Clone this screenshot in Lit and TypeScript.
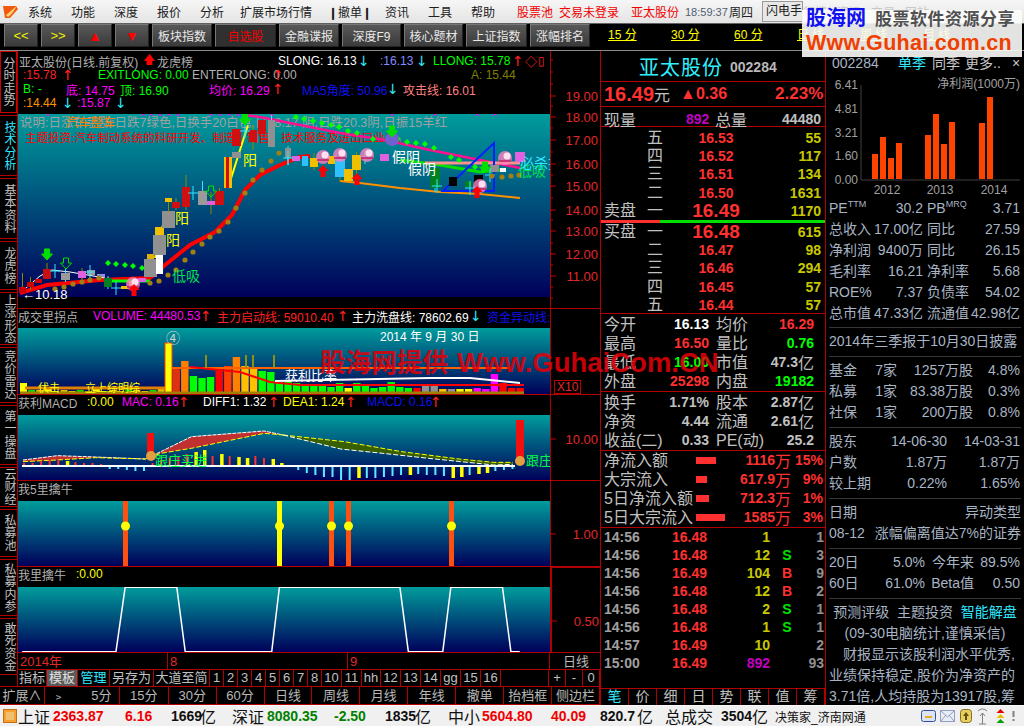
import { LitElement, html, svg, css } from 'lit';
import { customElement } from 'lit/decorators.js';

type Item = [number, string, string?, string?];

// a row of labels pinned to their x by giving each the width up to the next one
const row = (cls: string, start: number, end: number, items: Item[]) => html`<div class="row ${cls}">
  <span style="width:${items[0][0] - start}px"></span>
  ${items.map((it, i) => {
    const next = i + 1 < items.length ? items[i + 1][0] : end;
    const isArrow = it[1] === '↑' || it[1] === '↓';
    return html`<span class="${it[3] || ''} ${isArrow ? 'ar' : ''}" style="width:${next - it[0]}px;${it[2] ? `color:${it[2]}` : ''}">${it[1]}</span>`;
  })}
</div>`;

const RED = '#ff2020', CY = '#30e8ff', GR = '#00ff00', MG = '#ff00ff', YE = '#ffff00', GY = '#b0b0b0';

const candle = (x0: number, x1: number, y0: number, y1: number, c: string, wt?: number, wb?: number, wc = '#8a8a00') => {
  const m = (x0 + x1) / 2;
  return svg`${wt !== undefined ? svg`<line x1=${m} x2=${m} y1=${wt} y2=${wb} stroke=${wc} stroke-width="1"/>` : ''}
    <rect x=${x0} y=${y0} width=${x1 - x0} height=${y1 - y0} fill=${c}/>`;
};
const cross = (x: number, y: number, r = 7, c = CY) =>
  svg`<path d="M${x - 5} ${y}H${x + 5}M${x} ${y - r}V${y + r}" stroke=${c} stroke-width="1" fill="none"/>`;
const poly = (p: number[][], c: string, w: number, dash = '') =>
  svg`<polyline points=${p.map((q) => q.join(',')).join(' ')} fill="none" stroke=${c} stroke-width=${w} stroke-dasharray=${dash}/>`;
const flower = (x: number, y: number) => svg`
  <circle cx=${x} cy=${y} r="7" fill="#ff80c0" opacity=".8"/>
  <circle cx=${x + 2} cy=${y - 2} r="3.5" fill="#ffe0f0"/>
  <path d="M${x - 6} ${y + 3}h12" stroke="#c02060" stroke-width="1.5"/>`;
const down = (x: number, y: number, c: string, hollow = false) => svg`
  <path d="M${x - 2.5} ${y}h5v5h3l-5.5 6l-5.5 -6h3z" fill=${hollow ? 'none' : c} stroke=${c}/>`;
const up = (x: number, y: number) => svg`<path d="M${x} ${y}l5.5 6h-3v6h-5v-6h-3z" fill="#ff0000"/>`;
const label = (x: number, y: number, t: string, c: string, s = 13) =>
  svg`<text x=${x} y=${y} fill=${c} font-size=${s}>${t}</text>`;

const CANDLES: [number, number, number, number, string, number?, number?, string?][] = [
  [19, 26, 287, 293, '#d00000', 273, 293], [27, 34, 282, 287, '#d00000', 277, 290], [35, 42, 279, 283, '#d00000'],
  [43, 51, 269, 279, '#c81010', 263, 279], [61, 70, 273, 280, '#9a9a9a', 268, 282, CY], [78, 86, 271, 278, '#e060e0', 268, 282],
  [87, 95, 270, 275, '#9a9a9a'], [97, 105, 274, 277, '#9090e0'], [104, 112, 278, 287, '#008020', 276, 289, CY],
  [121, 128, 286, 289, '#f0c000'], [129, 137, 281, 287, '#f0c000'], [138, 146, 278, 282, '#e060e0'],
  [147, 154, 254, 259, '#e0b000'], [144, 157, 259, 277, '#909090'], [156, 163, 255, 274, '#ffffff'],
  [153, 166, 235, 255, '#909090'], [155, 164, 227, 235, '#f0c000'], [162, 175, 211, 228, '#909090'],
  [165, 172, 198, 202, '#f0c000', 198, 212], [172, 180, 202, 208, '#d01010', 198, 210], [182, 190, 187, 207, '#d01010', 175, 210],
  [198, 207, 191, 205, '#9a9a9a', 181, 205, CY], [207, 215, 201, 205, '#e060e0', 192, 214], [215, 224, 191, 205, '#d01010', 188, 205],
  [224, 232, 157, 188, '#f8c000'], [226, 229, 157, 188, '#d01010'], [232, 241, 152, 158, '#909090'], [232, 241, 129, 146, '#d01010'],
  [249, 257, 130, 142, '#d01010', 125, 150], [258, 266, 120, 134, '#d01010'], [268, 275, 120, 147, '#909090', 115, 147, CY],
  [285, 291, 148, 158, '#909090', 146, 165, CY], [292, 300, 156, 161, '#e060e0'], [302, 308, 156, 166, '#30c0ff'],
  [310, 318, 158, 167, '#f0c000', 153, 170], [328, 336, 156, 164, '#f0c000'], [335, 345, 159, 177, '#30c0ff', 155, 182],
  [344, 353, 169, 181, '#f0c000'], [352, 361, 155, 170, '#f0c000', 152, 182], [380, 389, 154, 161, '#e060e0'],
  [430, 440, 168, 188, '#008020', 165, 192, CY], [449, 457, 177, 186, '#000000'], [465, 472, 181, 187, '#008020'],
  [474, 483, 175, 186, '#000000'], [490, 499, 165, 172, '#909090'], [500, 506, 168, 172, '#ffffff'], [515, 525, 152, 162, '#e060e0'],
];
const OLIVE = [[55,289],[64,287],[73,284],[82,282],[90,280],[99,278],[150,283],[159,281],[168,275],[176,270],[185,260],[193,252],[202,244],[210,237],[219,231],[228,222],[236,208],[245,193],[253,180],[262,170],[271,161],[279,153],[492,176],[502,177],[511,176],[519,175]];
const DIAMONDS = [[108,263],[116,264],[125,265],[133,266],[142,268],[296,117],[304,119],[313,121],[322,123],[331,125],[339,127],[348,131],[357,133],[373,139],[398,139],[407,142],[416,143],[425,144],[434,148],[451,157],[459,160],[475,167],[484,170]];
const XMARKS = [48,143,151,160,169,178,211,220,229,238,272,392,435,477,495];

const mainChart = () => svg`
  ${XMARKS.map((x) => svg`<path d="M${x - 2} 112l4 4m0 -4l-4 4" stroke="#ff00ff"/>`)}
  ${label(20, 127, '说明:日涨车手涨:日跌7绿色,日换手20白色,日18.17 阴,日跌20.3阴,日振15羊红', '#a0a0a0', 12.5)}
  ${label(66, 127, '汽车整车', '#ff8000', 12.5)}
  ${label(25, 142, '主题投资:汽车制动系统的科研开发、制造、销售、技术服务及进出口业务。', '#ff0000', 11.5)}
  ${poly([[20,293],[47,285],[100,280],[150,278],[165,265],[190,245],[215,232],[232,215],[245,190],[260,175],[280,165],[300,157],[310,156]], '#ff0000', 4)}
  ${poly([[340,181],[360,183],[400,188],[440,192],[480,194],[520,198]], '#ff9000', 2)}
  ${poly([[245,115],[260,117],[300,125],[340,133],[385,140],[430,150],[480,160],[520,168]], '#ff1090', 2.5)}
  ${poly([[400,160],[440,165],[480,172],[500,170]], '#00e000', 3)}
  ${poly([[228,188],[240,150],[248,125]], '#ffff00', 2)}
  ${poly([[155,258],[166,212]], '#ffff00', 2)}
  ${poly([[26,288],[40,276],[52,270],[70,272],[105,278]], '#ffffff', 1)}
  ${poly([[108,281],[150,281]], '#00ff00', 3)}
  ${poly([[425,163],[520,163]], '#ff9090', 3)}
  <path d="M443 191L494 143V191Z" fill="none" stroke="#0020ff" stroke-width="2"/>
  ${CANDLES.map((c) => candle(c[0], c[1], c[2], c[3], c[4], c[5], c[6], c[7]))}
  ${[[55,271],[90,272],[116,288],[193,193],[245,131],[288,158],[365,157],[437,186],[470,188],[490,175]].map((p) => cross(p[0], p[1]))}
  ${OLIVE.map((p) => svg`<circle cx=${p[0]} cy=${p[1]} r="2.6" fill="#a08010"/>`)}
  ${DIAMONDS.map((p) => svg`<path d="M${p[0]} ${p[1] - 3}l3 3l-3 3l-3 -3z" fill="#00ff00"/>`)}
  ${[[133,284],[323,157],[340,155],[367,155],[505,158],[480,186]].map((p) => flower(p[0], p[1]))}
  <circle cx="392" cy="139" r="7" fill="#7060d0"/>
  ${down(47, 249, '#00e000')}${down(66, 258, '#00e000', true)}${down(211, 186, '#00e000', true)}${down(245, 114, '#00e000')}${down(392, 126, '#00e000')}${down(485, 162, '#00e000')}
  ${up(134, 284)}${up(323, 165)}${up(357, 173)}${up(477, 186)}
  ${label(243, 165, '阳', YE, 14)}${label(175, 223, '阳', YE, 14)}${label(166, 245, '阳', YE, 14)}
  ${label(172, 281, '低吸', '#00e050', 14)}${label(518, 176, '低吸', '#00e050', 14)}
  ${label(520, 168, '必杀技', CY, 14)}
  ${label(392, 162, '假阴', '#ffffff', 14)}${label(408, 174, '假阴', '#ffffff', 14)}
  ${label(22, 299, '←10.18', '#ffffff', 13)}
`;

const VOL: [number, string][] = [[368,'#e03010'],[361,'#ff8000'],[376,'#00ff00'],[378,'#00ff00'],[377,'#00ff00'],[371,'#ff0000'],[366,'#ff4000'],[357,'#ff8000'],[366,'#ffc000'],[368,'#ffc000'],[371,'#00ff00'],[372,'#00ff00'],[382,'#00ff00'],[381,'#00ff00'],[383,'#00ff00'],[385,'#00ff00'],[384,'#00ff00'],[386,'#00ff00'],[387,'#00ff00'],[383,'#00ff00'],[388,'#ffff00'],[383,'#00ff00'],[386,'#00ff00'],[388,'#00ff00'],[387,'#00ff00'],[382,'#00ff00'],[387,'#00ff00'],[388,'#00ff00'],[388,'#ff0000'],[384,'#909090'],[386,'#909090'],[389,'#ffc000'],[389,'#909090'],[389,'#ffff00'],[389,'#ffff00'],[388,'#ff00ff'],[389,'#ff00ff'],[374,'#ff00ff'],[383,'#ff0000'],[388,'#ff0000'],[388,'#ff0000']];
const LOW = [383,390,390,389,391,390,391,390,391,389,391,390,391,389,390,391,390,388];

const volChart = () => svg`
  ${LOW.map((y, i) => svg`<rect x=${20 + i * 8.1} y=${y} width="7" height=${395 - y} fill=${i % 3 === 0 ? '#ffff00' : i % 3 === 1 ? '#00e000' : '#e0c000'}/>`)}
  <rect x="165" y="343" width="7" height="52" fill="#ffff00" stroke="#ff4000"/>
  ${VOL.map((b, i) => svg`<rect x=${172.5 + i * 8.6} y=${b[0]} width="7.4" height=${395 - b[0]} fill=${b[1]}/>`)}
  ${poly([[25,388],[165,388]], '#e08000', 3)}
  ${poly([[20,393],[524,393]], '#a08000', 3)}
  ${poly([[172,368],[510,368]], '#ff6000', 2)}
  ${poly([[190,367],[240,372],[270,382],[300,385],[524,385]], '#ff0000', 2)}
  ${poly([[275,381],[430,378],[470,378],[520,383]], '#ffffff', 2)}
  ${[205,245,252,273].map((x) => svg`<rect x=${x} y=${355} width="2" height="13" fill="#909010"/>`)}
  ${label(166, 343, '④', '#d0d0d0', 14)}
  ${label(285, 380, '获利比率', '#ffffff', 13)}
  ${label(380, 341, '2014 年 9 月 30 日', '#ffffff', 12)}
  ${label(38, 392, '伏击', '#ffff00', 11)}${label(85, 392, '立上综明综', '#ffff00', 11)}
`;

const MACD = [3,3,5,6,6,5,4,3,3,2,-3,-3,-4,-5,-5,3,6,8,10,12,14,16,10,12,10,9,8,10,8,7,3,-1,-4,-7,-9,-11,-11,-14,-15,-12,-12,-12,-11,-10,-9,-9,-8,-9,-9,-10,-12,-11,-9,-8,-7,-5,-4,-3];
const YELLOW = new Set([5, 20, 21, 23, 25, 26, 29, 30, 39, 45, 50, 51, 53, 54]);
const zx = (x: number) => x / 2.613;
const zy = (y: number) => 305 + y / 3;
const conv = (pts: number[][]) => pts.map((p) => [zx(p[0]), zy(p[1])]);
const TOP_R = [[60,465],[150,452],[250,456],[380,462],[420,440],[500,395],[690,378],[740,390]];
const BOT_R = [[60,470],[150,465],[250,458],[380,462],[420,445],[500,430],[690,385],[740,390]];
const TOP_O = [[740,390],[900,410],[1050,440],[1200,462],[1290,472],[1340,472]];
const BOT_O = [[740,390],[890,432],[1000,445],[1120,460],[1290,480],[1340,478]];
const band = (a: number[][], b: number[][], c: string) =>
  svg`<polygon points=${[...conv(a), ...conv(b).reverse()].map((p) => p.join(',')).join(' ')} fill=${c}/>`;

const macdChart = () => svg`
  ${band(TOP_R, BOT_R, '#c03030')}${band(TOP_O, BOT_O, '#386000')}
  ${poly(conv(TOP_R), '#ffffff', 1, '4 1')}${poly(conv(BOT_R), '#ffff00', 1, '5 2')}
  ${poly(conv(TOP_O), '#ffff00', 1, '5 2')}${poly(conv(BOT_O), '#ffffff', 1, '5 2')}
  ${MACD.map((h, i) => {
    const x = 23 + i * 8.57;
    const c = YELLOW.has(i) ? '#ffff00' : h > 0 ? '#ff3030' : '#60e8ff';
    return svg`<rect x=${x} y=${h > 0 ? 466 - h : 466} width=${YELLOW.has(i) ? 3.5 : 2} height=${Math.abs(h)} fill=${c}/>`;
  })}
  <rect x="22" y="465" width="493" height="2" fill="#ffffff"/>
  <rect x="147" y="433" width="7" height="25" fill="#f01010"/>
  <rect x="516" y="420" width="8" height="42" fill="#f01010"/>
  <circle cx="151" cy="456" r="5" fill="#e0a040"/><circle cx="520" cy="461" r="5" fill="#e0a040"/>
  ${label(155, 465, '跟庄买进', '#00ff40', 13)}${label(526, 465, '跟庄', '#00ff40', 13)}
`;

const signalChart = () => svg`
  ${[[125.5,'#ff5010'],[279.5,'#ffff00'],[331.5,'#ff5010'],[348.5,'#ff5010'],[451.5,'#ff5010']].map((b) => svg`
    <rect x=${(b[0] as number) - 2.5} y="501" width="5" height="66" fill=${b[1]}/>
    <circle cx=${b[0]} cy="526" r="4.5" fill="#ffff00"/>`)}
`;

const TRAP = [[58,485],[303,485],[327,292],[462,292],[484,485],[710,485],[730,292],[1045,292],[1067,485],[1157,485],[1178,292],[1313,292],[1335,485],[1358,485]];
const trapChart = () => poly(TRAP.map((p) => [zx(p[0]), 490 + p[1] / 3]), '#ffffff', 1.5);

const plot = (y: number, h: number, content: unknown) =>
  html`<svg class="plotsvg" width="532" height=${h} viewBox="18 ${y} 532 ${h}">${content}</svg>`;

const axis = (y: number, h: number, ticks: [number, string][], minor: number[] = []) =>
  html`<svg class="axis" width="50" height=${h} viewBox="550 ${y} 50 ${h}">
    ${minor.map((t) => svg`<path d="M550 ${t}h3" stroke="#c00000"/>`)}
    ${ticks.map((t) => svg`<path d="M550 ${t[0]}h6" stroke="#c00000"/>
      <text x="598" y=${t[0] + 5} text-anchor="end" fill="#e02828" font-size="13">${t[1]}</text>`)}
  </svg>`;

const MAIN_TICKS: [number, string][] = [[96,'19.00'],[117,'18.00'],[140,'17.00'],[164,'16.00'],[186,'15.00'],[210,'14.00'],[231,'13.00'],[254,'12.00'],[276,'11.00']];
const MAIN_MINOR = [60,72,84,106,128,152,175,198,220,243,265,287,298];

const VTABS: [string, number, string][] = [['分时走势',62,'on'],['技术分析',61,'cy'],['基本资料',61,''],['龙虎榜',49,''],['上涨形态',53,''],['竞价雷达',56,''],['第一操盘',60,''],['云财经',40,''],['私募池',48,''],['私募内参',57,''],['敢死资金',57,'']];

const BUTTONS: [string, number, string][] = [['<<',34,'y'],['>>',34,'y'],['▲',34,'r'],['▼',34,'r'],['板块指数',60,''],['自选股',61,'act'],['金融谍报',60,''],['深度F9',59,''],['核心题材',59,''],['上证指数',61,''],['涨幅排名',60,'']];

const TABS: [string, number, string][] = [['指标',29,''],['模板',31,'gr'],['管理',32,'cy'],['另存为',44,''],['大道至简',56,''],['1',14,''],['2',14,''],['3',14,''],['4',14,''],['5',14,''],['6',14,''],['7',14,''],['8',14,''],['10',20,''],['11',20,''],['hh',19,''],['12',20,''],['13',20,''],['14',20,''],['gg',20,''],['15',20,''],['16',20,''],['',48,''],['+',17,''],['-',17,''],['0',17,'']];
const FRAMES: [string, number][] = [['扩展∧',45],['﹥　　5分',75],['15分',49],['30分',48],['60分',48],['日线',48],['周线',48],['月线',48],['年线',48],['撤单',48],['抬档框',48],['侧边栏',48]];

const ASKS = [['五','16.53','55'],['四','16.52','117'],['三','16.51','134'],['二','16.50','1631'],['一','16.49','1170']];
const BIDS = [['一','16.48','615'],['二','16.47','98'],['三','16.46','294'],['四','16.45','57'],['五','16.44','57']];
const FLOWS = [['净流入额',20,'1116','15%'],['大宗流入',11,'617.9','9%'],['5日净流入额',13,'712.3','1%'],['5日大宗流入',29,'1585','3%']];
const TRADES = [['14:56','16.48','1','','1'],['14:56','16.48','12','S','3'],['14:56','16.49','104','B','9'],['14:56','16.48','12','B','2'],['14:56','16.48','2','S','1'],['14:56','16.48','1','S','1'],['14:57','16.49','10','','2'],['15:00','16.49','892','','93']];
const PROFIT: [number, number][] = [[872,154],[880,137],[888,158],[896,143],[925,135],[933,114],[941,144],[949,122],[979,123],[987,97]];

@customElement('app-root')
export class AppRoot extends LitElement {
  static styles = css`
    :host {
      display: block; position: relative; width: 1024px; height: 726px; overflow: hidden; background: #000;
      font-family: "Liberation Sans", "Noto Sans CJK SC", sans-serif; font-size: 12px; color: #b8b8b8;
    }
    .row { display: flex; white-space: nowrap; align-items: center; }
    .row span { flex: none; overflow: visible; }
    .row .ar { font-family: "DejaVu Sans", sans-serif; font-size: 14px; line-height: 14px; }
    .menu { height: 23px; background: linear-gradient(#f6f6f6, #e4e4e4); color: #202020; font-size: 12px; position: relative; }
    .menu .row { height: 23px; }
    .menu .redt { color: #f00000; }
    .menu .clock { color: #506070; font-size: 11px; }
    .menu .box { border: 1px solid #999; background: #e8e8e8; padding: 2px 0 2px 3px; height: 15px; line-height: 15px; box-sizing: content-box; width: 36px !important; }
    .menu .fade { color: #c8c8c8; }
    .logo { position: absolute; left: 2px; top: 3px; }
    .toolbar { height: 28px; box-sizing: border-box; background: #000; border-top: 1px solid #606060; border-bottom: 1px solid #8a8a8a; display: flex; position: relative; }
    .btns { display: flex; gap: 3px; padding-left: 4px; height: 23px; }
    .btn {
      background: linear-gradient(#585858, #3a3a3a); border: 1px solid #777; border-right-color: #222; border-bottom-color: #222;
      box-sizing: border-box; display: flex; align-items: center; justify-content: center; color: #e8e8e8; font-size: 12px;
    }
    .btn.y { color: #f0f000; font-size: 13px; }
    .btn.r { color: #ff0000; font-size: 14px; }
    .btn.act { color: #f00000; background: #303030; }
    .frames { display: flex; padding-left: 18px; }
    .frames u { color: #ffff00; font-size: 12px; display: block; width: 63px; line-height: 23px; }
    .body { display: flex; height: 654px; }
    .left { width: 600px; display: flex; flex-direction: column; }
    .upper { display: flex; height: 635px; }
    .vtabs { width: 18px; display: flex; flex-direction: column; gap: 2px; border-right: 1px solid #b00000; box-sizing: border-box; }
    .vt {
      flex: none; writing-mode: vertical-rl; text-orientation: upright; text-align: center; font-size: 12px; line-height: 17px;
      border-top: 1px solid #b00000; border-bottom: 1px solid #b00000; box-sizing: border-box; color: #c0c0c0; letter-spacing: .5px; white-space: nowrap;
    }
    .vt.on { border: 1px solid #d00000; }
    .vt.cy { color: #30e8ff; }
    .charts { width: 582px; display: flex; flex-direction: column; }
    .pane { display: flex; border-bottom: 1px solid #b00000; box-sizing: border-box; }
    .pane > .ax { width: 50px; border-left: 1px solid #b00000; box-sizing: border-box; position: relative; }
    .pane > .mainc { width: 532px; display: flex; flex-direction: column; }
    .hd { flex: none; overflow: hidden; }
    .hd .row { height: 14px; }
    .hd.big { padding-top: 3px; box-sizing: border-box; }
    .plot { background: linear-gradient(#009c9c, #00005a); flex: 1; overflow: hidden; }
    .plot.m { background: linear-gradient(#009c9c 0, #00005a 183px, #000 183px); }
    .plotsvg { display: block; }
    .plotsvg text, .axis text { font-family: "Liberation Sans", "Noto Sans CJK SC", sans-serif; }
    .axis { display: block; position: absolute; left: -1px; top: 0; overflow: visible; }
    .x10 { position: absolute; left: 3px; bottom: 0; border: 1px solid #c00000; color: #e02828; font-size: 12px; padding: 0 2px; line-height: 12px; }
    .p5ax { border-left-width: 2px !important; border-top: 1px solid #b00000; }
    .taxis { height: 17px; display: flex; border-bottom: 1px solid #b00000; box-sizing: border-box; color: #e02828; font-size: 13px; }
    .taxis span { box-sizing: border-box; padding-left: 2px; border-right: 1px solid #b00000; line-height: 17px; }
    .taxis .dx { color: #b8b8b8; text-align: center; border: 0; }
    .tabs { height: 16px; display: flex; }
    .tabs span { box-sizing: border-box; border-right: 1px solid #b00000; text-align: center; line-height: 15px; color: #c0c0c0; font-size: 13px; }
    .tabs .gr { background: #5a5a5a; color: #e0e0e0; }
    .tabs .cy { color: #30e8ff; }
    .tf { height: 19px; display: flex; border-top: 1px solid #b00000; border-bottom: 1px solid #b00000; box-sizing: border-box; }
    .tf span { box-sizing: border-box; border-right: 1px solid #b00000; text-align: center; line-height: 17px; font-size: 13px; color: #b8b8b8; }
    .quote { width: 226px; border-left: 1px solid #b00000; border-right: 1px solid #b00000; box-sizing: border-box; display: flex; flex-direction: column; font-size: 16px; color: #c0c0c0; }
    .q { border-bottom: 1px solid #b00000; box-sizing: border-box; flex: none; }
    .num { font-weight: bold; font-size: 14px; }
    .title { height: 31px; display: flex; align-items: center; padding-left: 38px; gap: 7px; color: #30f0ff; font-size: 20px; letter-spacing: 1px; }
    .title b { color: #b8b8b8; font-size: 14px; letter-spacing: 0; margin-top: 2px; }
    .price { height: 25px; display: flex; align-items: center; padding: 0 0 0 3px; color: #ff3030; font-weight: bold; }
    .price .big { font-size: 20px; }
    .price .yuan { font-weight: normal; color: #c0c0c0; font-size: 16px; width: 26px; }
    .price .chg { font-size: 16px; width: 95px; }
    .price .pct { font-size: 17px; }
    .cur { height: 20px; display: grid; grid-template-columns: 82px 23px 6px 36px 1fr; padding-left: 3px; padding-right: 4px; align-items: center; }
    .cur .m { color: #c000c0; }
    .cur .r { text-align: right; }
    .book { display: flex; flex-direction: column; flex: none; }
    .book.ask { padding-top: 2px; }
    .book.bid { height: 91px; }
    .ob { display: grid; grid-template-columns: 42px 30px 80px 65px; padding-left: 3px; height: 18.2px; flex: none; align-items: center; line-height: 18px; }
    .ob .p { color: #ff3030; text-align: center; }
    .ob .p.big { font-size: 19px; }
    .ob .v { color: #c8c800; text-align: right; }
    .ob .c { text-align: center; width: 16px; margin-left: 1px; }
    .bar { height: 3px; flex: none; background: linear-gradient(90deg, #ff3030 59px, #00e000 59px); }
    .st { display: grid; grid-template-columns: 46px 59px 46px 59px; padding: 1px 0 0 3px; }
    .st div { height: 19px; line-height: 19px; white-space: nowrap; }
    .st .r { display: flex; justify-content: flex-end; align-items: center; font-weight: bold; font-size: 14px; }
    .st .r em { font: normal 16px/19px "Noto Sans CJK SC", sans-serif; }
    .st .g2 { margin-left: 7px; }
    .fl { display: grid; grid-template-columns: 92px 30px 65px 32px; padding-left: 3px; }
    .fl div { height: 19px; line-height: 19px; white-space: nowrap; color: #ff3030; }
    .fl .l { color: #c0c0c0; }
    .fl i { display: block; height: 7px; background: #ff3030; margin-top: 6px; }
    .fl .a { display: flex; justify-content: flex-end; align-items: center; font-weight: bold; font-size: 14px; }
    .fl .c { text-align: right; font-weight: bold; font-size: 14px; }
    .fl .a em { font: normal 16px/19px "Noto Sans CJK SC", sans-serif; }
    .tr { display: grid; grid-template-columns: 68px 60px 38px 32px 22px; padding-left: 3px; font-weight: bold; font-size: 14px; flex: 1; align-content: start; }
    .tr div { height: 18px; line-height: 18px; }
    .tr .c { color: #a0a0a0; }
    .tr .p { color: #ff3030; }
    .tr .v { text-align: right; }
    .tr .f { text-align: center; padding-left: 2px; }
    .tr .n { color: #909090; text-align: right; }
    .qtabs { display: flex; height: 17px; flex: none; border-top: 1px solid #b00000; box-sizing: border-box; font-size: 14px; line-height: 15px; }
    .qtabs span { width: 28px; border-right: 1px solid #b00000; box-sizing: border-box; text-align: center; color: #c0c0c0; }
    .qtabs .cy { color: #30e8ff; }
    .side { width: 198px; font-size: 14px; color: #a8b4c4; box-sizing: border-box; padding: 0 3px; overflow: hidden; display: flex; flex-direction: column; }
    .shead { height: 20px; flex: none; padding-top: 5px; box-sizing: border-box; line-height: 15px; }
    .side .row { height: 15px; }
    .mini { display: block; flex: none; margin-left: -3px; }
    .mini text { font-family: "Liberation Sans", "Noto Sans CJK SC", sans-serif; fill: #a0a0a0; }
    .sec { border-bottom: 1px solid #383838; padding: 3px 0 4px; flex: none; }
    .sec.first { padding: 0 0 3px; }
    .l { height: 21px; line-height: 21px; white-space: nowrap; display: flex; }
    .kv { display: flex; justify-content: space-between; }
    .k1 { width: 94px; }
    .k2 { width: 93px; margin-left: 4px; }
    .l sup { font-size: 9px; line-height: 9px; vertical-align: 6px; }
    .s3 > span { text-align: right; display: block; }
    .s3 > span:first-child { text-align: left; }
    .para { padding-top: 3px; }
    .para .ctr { justify-content: center; }
    .para .cy { color: #30e8ff; }
    .status { height: 21px; background: #f0f0f0; color: #101010; font-size: 16px; position: relative; border-top: 1px solid #fafafa; box-sizing: border-box; }
    .status .row { height: 20px; }
    .status .bn { font-weight: bold; font-size: 14px; }
    .status .sm { font-size: 12px; }
    .tray { position: absolute; left: 921px; top: 2px; }
    .sicon { position: absolute; left: 3px; top: 3px; width: 12px; height: 12px; background: #f0c070; border: 1px solid #c07010; box-shadow: inset 0 0 0 2px #f8a030; }
    .wm-top { position: absolute; left: 802px; top: 10px; width: 220px; height: 47px; background: rgba(252, 252, 250, .9); }
    .wm-a { position: absolute; left: 4px; top: 0; color: #1010f0; font-size: 20px; font-weight: bold; line-height: 17px; }
    .wm-b { position: absolute; left: 73px; top: 0; color: #505050; font-size: 17px; font-weight: bold; letter-spacing: .5px; line-height: 19px; font-family: "Liberation Serif", "Noto Sans CJK SC", serif; }
    .wm-c { position: absolute; left: 4px; top: 21px; color: #f04000; font-size: 21.5px; font-weight: bold; line-height: 24px; letter-spacing: .3px; }
    .wm-mid { position: absolute; left: 320px; top: 345px; color: rgba(224, 0, 10, .88); font-size: 25.6px; font-weight: bold; line-height: 36px; white-space: nowrap; }
    .wm-mid span { font-size: 27.5px; margin-left: 9px; }
  `;

  private pane(h: number, headH: number, head: unknown, y: number, content: unknown, ax: unknown, main = false, extra = '') {
    const plotH = h - headH - 1;
    return html`<div class="pane" style="height:${h}px">
      <div class="mainc">
        <div class="hd ${main ? 'big' : ''}" style="height:${headH}px">${head}</div>
        <div class="plot ${main ? 'm' : ''}">${plot(y, plotH, content)}</div>
      </div>
      <div class="ax ${extra}">${ax}</div>
    </div>`;
  }

  render() {
    return html`
      <div class="menu">
        <svg class="logo" width="17" height="17" viewBox="0 0 17 17">
          <path d="M1 3h13l2 3l-8 9H3z" fill="#f05a10"/><path d="M4 12C7 10 10 6 15 3C12 8 9 12 6 14z" fill="#ffd070"/>
        </svg>
        ${row('', 0, 1024, [
          [28,'系统'],[71,'功能'],[114,'深度'],[157,'报价'],[200,'分析'],[240,'扩展市场行情'],[328,'❙撤单❙'],[385,'资讯'],[428,'工具'],[471,'帮助'],
          [517,'股票池','','redt'],[559,'交易未登录','','redt'],[631,'亚太股份','','redt'],[685,'18:59:37','','clock'],[729,'周四'],[762,'闪电手','','box'],[812,'行情','','fade'],[846,'资讯','','fade'],[880,'交易','','fade'],[914,'网站','','fade'],
        ])}
      </div>
      <div class="toolbar">
        <div class="btns">${BUTTONS.map((b) => html`<div class="btn ${b[2]}" style="width:${b[1]}px">${b[0]}</div>`)}</div>
        <div class="frames">${['15 分','30 分','60 分','日 线','周 线','月 线'].map((t) => html`<u>${t}</u>`)}</div>
      </div>
      <div class="body">
        <div class="left">
          <div class="upper">
            <div class="vtabs">
              ${VTABS.map((v) => html`<div class="vt ${v[2]}" style="height:${v[1]}px">${v[0]}</div>`)}
            </div>
            <div class="charts">
              ${this.pane(258, 63, html`
                ${row('', 18, 550, [[19,'亚太股份(日线.前复权)',GY],[143,'🡅','#ff0000'],[157,'龙虎榜',GY],[278,'SLONG: 16.13','#ffffff'],[358,'↓',CY],[380,':16.13','#8888ff'],[416,'↓',CY],[433,'LLONG: 15.78',GR],[512,'↑',RED],[525,'◇',RED],[538,'▯',RED]])}
                ${row('', 18, 550, [[23,':15.78',RED],[62,'↑',RED],[98,'EXITLONG: 0.00',GR],[192,'ENTERLONG: 0.00',GY],[272,'↑',RED],[471,'A: 15.44','#808000']])}
                ${row('', 18, 550, [[23,'B: -',GR],[66,'底: 14.75',MG],[120,'顶: 16.90',GR],[209,'均价: 16.29',MG],[272,'↑',RED],[302,'MA5角度: 50.96','#1010f0'],[387,'↓',CY],[403,'攻击线: 16.01','#ff8080']])}
                ${row('', 18, 550, [[23,':14.44','#ff9000'],[62,'↓',CY],[77,':15.87',MG],[115,'↓',CY]])}
              `, 114, mainChart(), axis(51, 257, MAIN_TICKS, MAIN_MINOR), true)}
              ${this.pane(86, 19, row('', 18, 550, [[18,'成交里拐点',GY],[93,'VOLUME: 44480.53',MG],[200,'↑',RED],[217,'主力启动线: 59010.40',RED],[337,'↑',RED],[352,'主力洗盘线: 78602.69','#ffffff'],[470,'↓',CY],[487,'资金异动线:','#1010f0']]),
                328, volChart(), html`${axis(309, 85, [])}<div class="x10">X10</div>`)}
              ${this.pane(86, 20, row('', 18, 550, [[18,'获利MACD',GY],[87,':0.00',YE],[122,'MAC: 0.16',MG],[178,'↑',RED],[203,'DIFF1: 1.32','#ffffff'],[268,'↑',RED],[283,'DEA1: 1.24',YE],[345,'↑',RED],[367,'MACD: 0.16','#1010f0'],[430,'↑',RED]]),
                415, macdChart(), axis(395, 85, [[439,'10.00']]))}
              ${this.pane(86, 20, row('', 18, 550, [[18,'我5里擒牛',GY]]), 501, signalChart(), axis(481, 85, [[534,'1.00']]))}
              ${this.pane(86, 20, row('', 18, 550, [[18,'我里擒牛',GY],[76,':0.00',YE]]), 587, trapChart(), axis(567, 85, [[620,'0.50']]), false, 'p5ax')}
              <div class="taxis">
                <span style="width:150px">2014年</span><span style="width:180px">8</span><span style="width:202px">9</span><span class="dx" style="width:50px">日线</span>
              </div>
              <div class="tabs">${TABS.map((t) => html`<span class=${t[2]} style="width:${t[1]}px">${t[0]}</span>`)}</div>
            </div>
          </div>
          <div class="tf">${FRAMES.map((f) => html`<span style="width:${f[1]}px">${f[0]}</span>`)}</div>
        </div>
        <div class="quote">
          <div class="q title">亚太股份<b>002284</b></div>
          <div class="q price"><span class="big">16.49</span><span class="yuan">元</span><span class="chg">▲0.36</span><span class="pct">2.23%</span></div>
          <div class="q cur"><span>现量</span><span class="num m">892</span><span></span><span>总量</span><span class="num r">44480</span></div>
          <div class="book ask">
            ${ASKS.map((r, i) => html`<div class="ob"><span>${i === 4 ? '卖盘' : ''}</span><span class="c">${r[0]}</span><span class="p num ${i === 4 ? 'big' : ''}">${r[1]}</span><span class="v num">${r[2]}</span></div>`)}
          </div>
          <div class="bar"></div>
          <div class="q book bid">
            ${BIDS.map((r, i) => html`<div class="ob"><span>${i === 0 ? '买盘' : ''}</span><span class="c">${r[0]}</span><span class="p num ${i === 0 ? 'big' : ''}">${r[1]}</span><span class="v num">${r[2]}</span></div>`)}
          </div>
          <div class="q st">
            <div>今开</div><div class="r" style="color:#fff">16.13</div><div class="g2">均价</div><div class="r" style="color:#ff3030">16.29</div>
            <div>最高</div><div class="r" style="color:#ff3030">16.50</div><div class="g2">量比</div><div class="r" style="color:#00ff00">0.76</div>
            <div>最低</div><div class="r" style="color:#00ff00">16.00</div><div class="g2">市值</div><div class="r">47.3<em>亿</em></div>
            <div>外盘</div><div class="r" style="color:#ff3030">25298</div><div class="g2">内盘</div><div class="r" style="color:#00ff00">19182</div>
          </div>
          <div class="q st">
            <div>换手</div><div class="r">1.71%</div><div class="g2">股本</div><div class="r">2.87<em>亿</em></div>
            <div>净资</div><div class="r">4.44</div><div class="g2">流通</div><div class="r">2.61<em>亿</em></div>
            <div>收益(二)</div><div class="r">0.33</div><div class="g2">PE(动)</div><div class="r">25.2</div>
          </div>
          <div class="q fl">
            ${FLOWS.map((f) => html`<div class="l">${f[0]}</div><div><i style="width:${f[1]}px"></i></div><div class="a">${f[2]}<em>万</em></div><div class="c">${f[3]}</div>`)}
          </div>
          <div class="tr">
            ${TRADES.map((t) => html`<div class="c">${t[0]}</div><div class="p">${t[1]}</div><div class="v" style="color:${t[2] === '892' ? '#c000c0' : '#c8c800'}">${t[2]}</div>
              <div class="f" style="color:${t[3] === 'S' ? '#00e000' : '#ff3030'}">${t[3]}</div><div class="n">${t[4]}</div>`)}
          </div>
          <div class="qtabs">${['笔','价','细','日','势','联','值','筹'].map((t, i) => html`<span class=${i === 0 ? 'cy' : ''}>${t}</span>`)}</div>
        </div>
        <div class="side">
          <div class="shead">${row('', 829, 1021, [[832,'002284'],[898,'单季',CY],[932,'同季','#c8c8c8'],[965,'更多..','#c8c8c8'],[1012,'×','#c8c8c8']])}</div>
          <svg class="mini" width="198" height="127" viewBox="826 71 198 127">
            <path d="M861 85V180M861 180H1020" stroke="#404040" fill="none"/>
            ${[[85,'6.41'],[109,'4.81'],[133,'3.21'],[156,'1.60'],[180,'0.00']].map((t) => svg`<text x="858" y=${Number(t[0]) + 4} text-anchor="end" font-size="12">${t[1]}</text>`)}
            <text x="1020" y="88" text-anchor="end" font-size="12">净利润(1000万)</text>
            ${PROFIT.map((b) => svg`<rect x=${b[0]} y=${b[1]} width="6" height=${179 - b[1]} fill="#ff4400"/>`)}
            ${[[887,'2012'],[940,'2013'],[994,'2014']].map((t) => svg`<text x=${t[0]} y="194" text-anchor="middle" font-size="12">${t[1]}</text>`)}
          </svg>
          <div class="sec first">
            <div class="l"><span class="kv k1"><span>PE<sup>TTM</sup></span><span>30.2</span></span><span class="kv k2"><span>PB<sup>MRQ</sup></span><span>3.71</span></span></div>
            <div class="l"><span class="kv k1"><span>总收入</span><span>17.00亿</span></span><span class="kv k2"><span>同比</span><span>27.59</span></span></div>
            <div class="l"><span class="kv k1"><span>净利润</span><span>9400万</span></span><span class="kv k2"><span>同比</span><span>26.15</span></span></div>
            <div class="l"><span class="kv k1"><span>毛利率</span><span>16.21</span></span><span class="kv k2"><span>净利率</span><span>5.68</span></span></div>
            <div class="l"><span class="kv k1"><span>ROE%</span><span>7.37</span></span><span class="kv k2"><span>负债率</span><span>54.02</span></span></div>
            <div class="l"><span class="kv k1"><span>总市值</span><span>47.33亿</span></span><span class="kv k2"><span>流通值</span><span>42.98亿</span></span></div>
          </div>
          <div class="sec"><div class="l">2014年三季报于10月30日披露</div></div>
          <div class="sec">
            ${[['基金','7家','1257万股','4.8%'],['私募','1家','83.38万股','0.3%'],['社保','1家','200万股','0.8%']].map((r) => html`
              <div class="l s3"><span style="width:40px">${r[0]}</span><span style="width:28px">${r[1]}</span><span style="width:76px">${r[2]}</span><span style="width:47px">${r[3]}</span></div>`)}
          </div>
          <div class="sec">
            ${[['股东','14-06-30','14-03-31'],['户数','1.87万','1.87万'],['较上期','0.22%','1.65%']].map((r) => html`
              <div class="l s3"><span style="width:42px">${r[0]}</span><span style="width:76px">${r[1]}</span><span style="width:73px">${r[2]}</span></div>`)}
          </div>
          <div class="sec">
            <div class="l kv"><span>日期</span><span>异动类型</span></div>
            <div class="l kv"><span>08-12</span><span>涨幅偏离值达7%的证券</span></div>
          </div>
          <div class="sec">
            <div class="l s3"><span style="width:40px">20日</span><span style="width:56px">5.0%</span><span style="width:49px;">今年来</span><span style="width:46px">89.5%</span></div>
            <div class="l s3"><span style="width:40px">60日</span><span style="width:56px">61.0%</span><span style="width:49px">Beta值</span><span style="width:46px">0.50</span></div>
          </div>
          <div class="para">
            <div class="l ctr"><span>预测评级&nbsp;&nbsp;主题投资&nbsp;&nbsp;<span class="cy">智能解盘</span></span></div>
            <div class="l ctr">(09-30电脑统计,谨慎采信)</div>
            <div class="l">　财报显示该股利润水平优秀,</div>
            <div class="l">业绩保持稳定,股价为净资产的</div>
            <div class="l">3.71倍,人均持股为13917股,筹</div>
          </div>
        </div>
      </div>
      <div class="status">
        <div class="sicon"></div>
        ${row('', 0, 1024, [
          [18,'上证'],[53,'2363.87','#f00000','bn'],[125,'6.16','#f00000','bn'],[171,'1669','#101010','bn'],[200,'亿'],[232,'深证'],[267,'8080.35','#008000','bn'],[334,'-2.50','#008000','bn'],[385,'1835','#101010','bn'],[415,'亿'],
          [448,'中小'],[482,'5604.80','#f00000','bn'],[551,'40.09','#f00000','bn'],[600,'820.7','#101010','bn'],[637,'亿'],[665,'总成交'],[721,'3504','#101010','bn'],[752,'亿'],[775,'决策家_济南网通','#101010','sm'],
        ])}
        <svg class="tray" width="98" height="17" viewBox="921 707 98 17">
          <rect x="921.5" y="709.5" width="14" height="11" rx="2" fill="#dce4f4" stroke="#3050a0"/><path d="M925 716h7" stroke="#e0b020" stroke-width="2"/>
          <rect x="940.5" y="709.5" width="14" height="11" fill="#e8ecf4" stroke="#90a0c0"/><path d="M941 710l6.5 6l6.5 -6M941 720l5 -6M954 720l-5 -6" stroke="#90a0c0" fill="none"/>
          <rect x="960.5" y="708.5" width="11" height="13" rx="3" fill="#e8d060" stroke="#807020"/><path d="M966 711l3 4h-2v4h-2v-4h-2z" fill="#605010"/>
          <path d="M982.5 712V723M979 723h7M980 715l2.5 -3l2.5 3M978 710a6 6 0 0 1 9 0M977 707a8 8 0 0 1 11 0" stroke="#808080" fill="none"/>
          <path d="M1000.5 708l4 4h-8z" fill="#e00000"/><path d="M1000.5 713l4 4h-8z" fill="#e8c000"/><path d="M1000.5 718l4 4h-8z" fill="#00a000"/>
          <path d="M1013.5 710v6M1013.5 718v2" stroke="#808080" stroke-width="2"/>
        </svg>
      </div>
      <div class="wm-top">
        <div class="wm-a">股海网</div>
        <div class="wm-b">股票软件资源分享</div>
        <div class="wm-c">Www.Guhai.com.cn</div>
      </div>
      <div class="wm-mid">股海网提供<span>Www.GuhaiCom.CN</span></div>
    `;
  }
}

declare global {
  interface HTMLElementTagNameMap {
    'app-root': AppRoot;
  }
}
